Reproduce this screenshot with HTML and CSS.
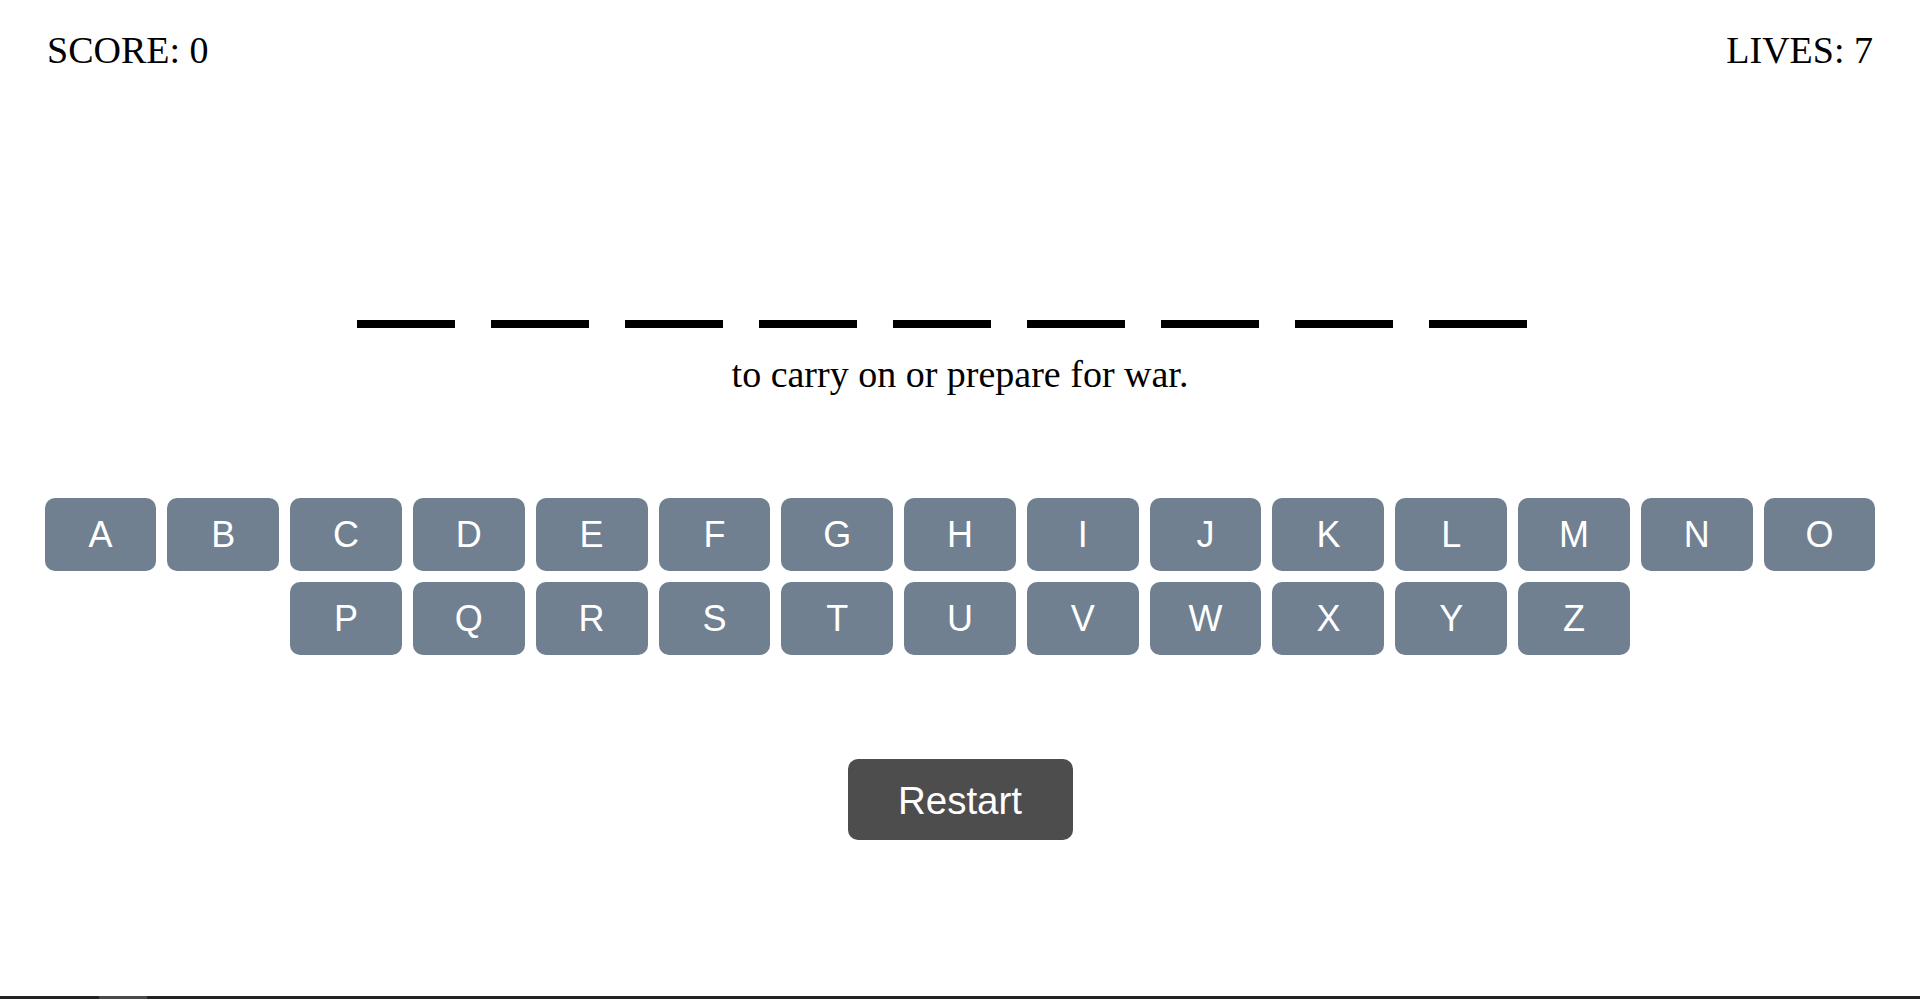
FILE: index.html
```html
<!DOCTYPE html>
<html lang="en">
<head>
<meta charset="utf-8">
<title>Hangman</title>
<link rel="stylesheet" href="styles.css">
</head>
<body>
<header class="status">
  <div class="score">SCORE: 0</div>
  <div class="lives">LIVES: 7</div>
</header>
<main class="game">
  <div class="word">
    <span class="slot"></span><span class="slot"></span><span class="slot"></span><span class="slot"></span><span class="slot"></span><span class="slot"></span><span class="slot"></span><span class="slot"></span><span class="slot"></span>
  </div>
  <p class="hint">to carry on or prepare for war.</p>
  <div class="keyboard">
    <button class="key">A</button><button class="key">B</button><button class="key">C</button><button class="key">D</button><button class="key">E</button><button class="key">F</button><button class="key">G</button><button class="key">H</button><button class="key">I</button><button class="key">J</button><button class="key">K</button><button class="key">L</button><button class="key">M</button><button class="key">N</button><button class="key">O</button>
    <button class="key">P</button><button class="key">Q</button><button class="key">R</button><button class="key">S</button><button class="key">T</button><button class="key">U</button><button class="key">V</button><button class="key">W</button><button class="key">X</button><button class="key">Y</button><button class="key">Z</button>
  </div>
  <div class="actions">
    <button class="restart">Restart</button>
  </div>
</main>
<div class="scrollbar"><div class="thumb"></div></div>
</body>
</html>
```
FILE: styles.css
```css
html, body {
  margin: 0;
  padding: 0;
  background: #ffffff;
}
body {
  font-family: "Liberation Serif", "Times New Roman", serif;
  color: #000;
  overflow: hidden;
  height: 999px;
}
.status {
  display: flex;
  justify-content: space-between;
  padding: 28px 47px 0 47px;
  font-size: 38px;
  line-height: 44px;
}
.game {
  display: flex;
  flex-direction: column;
  align-items: center;
}
.word {
  display: flex;
  justify-content: center;
  margin-top: 248px;
  height: 8px;
}
.slot {
  display: block;
  width: 98px;
  height: 8px;
  background: #000;
  margin-right: 36px;
}
.hint {
  margin: 24px 0 0;
  font-size: 38px;
  line-height: 44px;
  text-align: center;
}
.keyboard {
  display: flex;
  flex-wrap: wrap;
  justify-content: center;
  gap: 11px;
  width: 1831px;
  margin-top: 102px;
}
.key {
  width: 111.8px;
  height: 73px;
  border: none;
  border-radius: 10px;
  background: #708090;
  color: #fff;
  font-family: "Liberation Sans", Arial, sans-serif;
  font-size: 36px;
  padding: 0;
  display: flex;
  align-items: center;
  justify-content: center;
}
.actions {
  margin-top: 104px;
  display: flex;
  justify-content: center;
}
.restart {
  width: 225px;
  height: 81px;
  border: none;
  border-radius: 10px;
  background: #4d4d4d;
  color: #fff;
  font-family: "Liberation Sans", Arial, sans-serif;
  font-size: 38.5px;
  padding: 2px 0 0;
}
.scrollbar {
  position: fixed;
  left: 0;
  right: 0;
  bottom: 0;
  height: 3px;
  background: #222222;
}
.thumb {
  margin-left: 99px;
  width: 48px;
  height: 3px;
  background: #4a4a4a;
}
```
